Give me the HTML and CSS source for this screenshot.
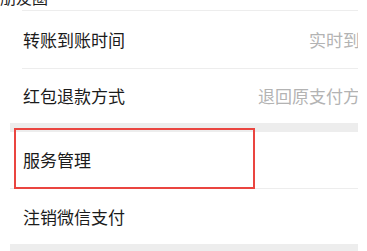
FILE: index.html
```html
<!DOCTYPE html>
<html lang="zh-CN">
<head>
<meta charset="utf-8">
<link rel="stylesheet" href="styles.css">
</head>
<body>
<div class="page">
  <div class="top-title">朋友圈</div>
  <div class="group">
    <div class="divider"></div>
    <div class="row row-a"><span class="label">转账到账时间</span><span class="value">实时到账</span></div>
    <div class="divider"></div>
    <div class="row row-b"><span class="label">红包退款方式</span><span class="value">退回原支付方式</span></div>
    <div class="gap"></div>
    <div class="row row-c"><span class="label">服务管理</span></div>
    <div class="divider full"></div>
    <div class="row row-d"><span class="label">注销微信支付</span></div>
    <div class="gap"></div>
  </div>
  <div class="highlight"></div>
</div>
</body>
</html>
```
FILE: styles.css
```css
html, body {
  margin: 0;
  padding: 0;
  background: #ffffff;
}
.page {
  position: relative;
  width: 367px;
  height: 251px;
  overflow: hidden;
  font-family: "Noto Sans CJK SC", "Noto Sans", sans-serif;
  color: #1b1b1b;
}
.top-title {
  margin-top: -11px;
  height: 21px;
  font-size: 16px;
  line-height: 16px;
  padding-left: 0;
}
.group {
  margin-left: 10px;
  width: 348px;
  overflow: hidden;
  background: #ffffff;
}
.divider {
  height: 1px;
  margin-left: 12px;
  background: #ededed;
}
.divider.full {
  margin-left: 0;
}
.row {
  display: flex;
  align-items: center;
  justify-content: space-between;
  padding-left: 13px;
  font-size: 17px;
  line-height: 20px;
  white-space: nowrap;
}
.row-a { height: 57px; }
.row-b { height: 54px; }
.row-c { height: 56px; }
.row-d { height: 55px; }
.value {
  color: #b3b3b3;
  margin-right: -19px;
}
.gap {
  height: 9px;
  background: #ededed;
}
.highlight {
  position: absolute;
  left: 14px;
  top: 128px;
  width: 237px;
  height: 57px;
  border: 2px solid #ea4540;
}
```
